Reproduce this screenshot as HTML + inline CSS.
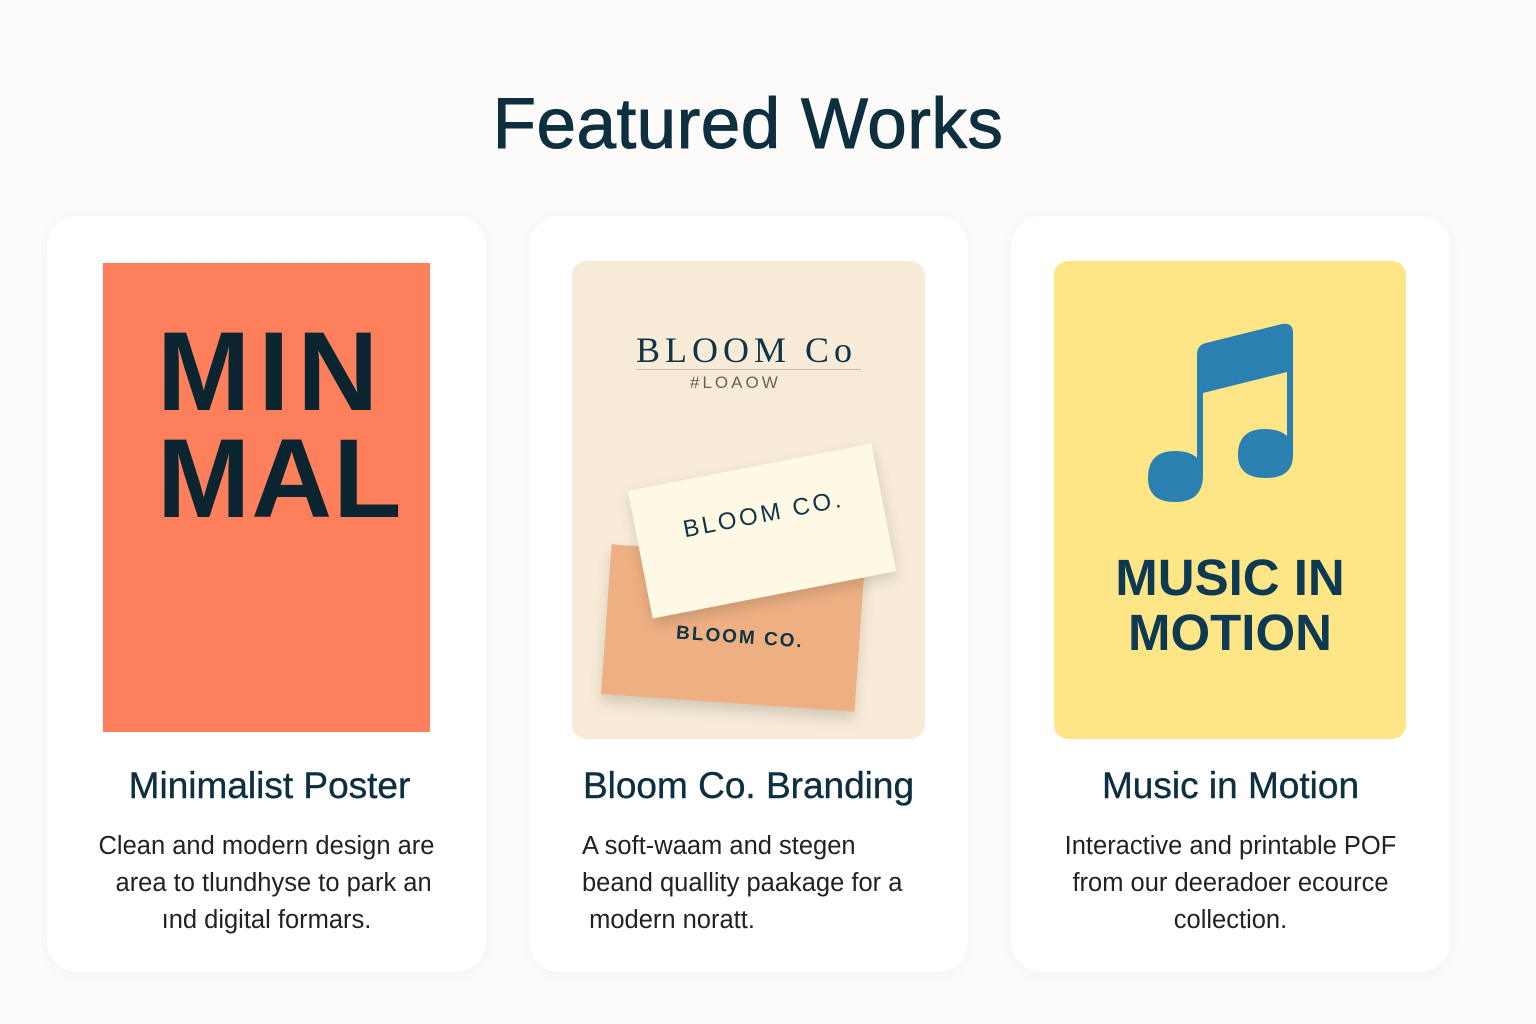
<!DOCTYPE html>
<html><head><meta charset="utf-8"><style>
*{margin:0;padding:0;box-sizing:border-box}
body{width:1536px;height:1024px;background:#fcfbf9;position:relative;overflow:hidden;font-family:"Liberation Sans","DejaVu Sans",sans-serif;color:#0d2f3f}
h1{position:absolute;top:84px;left:0;width:1496px;text-align:center;font-size:71px;font-weight:500;letter-spacing:0.5px;color:#0d2f3f;-webkit-text-stroke:1px #0d2f3f}
.card{position:absolute;top:216px;width:439px;height:756px;background:#fff;border-radius:30px;box-shadow:0 2px 14px rgba(0,0,0,.04)}
.t{position:absolute;top:765px;font-size:37px;color:#0d2f3f;width:439px;text-align:center;-webkit-text-stroke:0.4px #0d2f3f}
.d{position:absolute;top:828px;font-size:25.5px;line-height:37px;color:#222;font-weight:300;text-align:center}
.abs{position:absolute}
</style></head><body>
<h1>Featured Works</h1>
<div class="card" style="left:47px"></div>
<div class="card" style="left:529px"></div>
<div class="card" style="left:1011px"></div>

<div class="abs" style="left:103px;top:263px;width:327px;height:469px;background:#fe7f5c"></div>
<div class="abs" style="left:157px;top:318px;font-size:112px;font-weight:bold;line-height:107px;color:#0b2530;letter-spacing:1px"><span style="letter-spacing:8px">MIN</span><br>MAL</div>

<div class="abs" style="left:572px;top:261px;width:353px;height:478px;background:#f8ecd8;border-radius:14px;overflow:hidden">
 <div class="abs" style="left:64px;top:68px;font-size:36px;letter-spacing:5px;color:#0f3347;font-family:'Liberation Serif',serif">BLOOM Co</div>
 <div class="abs" style="left:64px;top:108px;width:225px;height:1px;background:#c9bba8"></div>
 <div class="abs" style="left:118px;top:112px;font-size:17px;letter-spacing:3px;color:#6a6258">#LOAOW</div>
 <div class="abs" style="left:34px;top:292px;width:254px;height:150px;background:#eeb083;transform:rotate(4deg);box-shadow:0 8px 14px rgba(0,0,0,.15)"></div>
 <div class="abs" style="left:104px;top:366px;font-size:19px;font-weight:bold;letter-spacing:2px;color:#0f3347;transform:rotate(4deg)">BLOOM CO.</div>
 <div class="abs" style="left:66px;top:205px;width:248px;height:130px;background:#fdf9e4;transform:rotate(-11deg);box-shadow:0 6px 14px rgba(0,0,0,.15)"></div>
 <div class="abs" style="left:110px;top:240px;font-size:24px;letter-spacing:3px;color:#0f3347;transform:rotate(-11deg)">BLOOM CO.</div>
</div>

<div class="abs" style="left:1054px;top:261px;width:352px;height:478px;background:#fee687;border-radius:14px"></div>
<svg class="abs" style="left:1054px;top:261px" width="352" height="478" viewBox="1054 261 352 478">
<path fill="#2a80b0" d="M1197 355 Q1197 345 1206 343 L1282 324 Q1293 322 1293 333 L1293 455 Q1293 478 1266 478 Q1238 478 1238 455 Q1238 429 1265 429 Q1280 429 1287 436 L1287 372 L1203 393 L1203 475 Q1203 502 1175 502 Q1148 502 1148 478 Q1148 451 1175 451 Q1190 451 1197 458 Z"/>
</svg>
<div class="abs" style="left:1054px;top:550px;width:352px;text-align:center;font-size:51px;font-weight:bold;line-height:55px;color:#0d3a52">MUSIC IN<br>MOTION</div>

<div class="t" style="left:47px;padding-left:6px">Minimalist Poster</div>
<div class="t" style="left:529px">Bloom Co. Branding</div>
<div class="t" style="left:1011px">Music in Motion</div>

<div class="d" style="left:47px;width:439px">Clean and modern design are<br>&nbsp;&nbsp;area to tlundhyse to park an<br>ınd digital formars.</div>
<div class="d" style="left:582px;width:380px;text-align:left">A soft-waam and stegen<br>beand quallity paakage for a<br>&nbsp;modern noratt.</div>
<div class="d" style="left:1011px;width:439px">Interactive and printable POF<br>from our deeradoer ecource<br>collection.</div>
</body></html>
